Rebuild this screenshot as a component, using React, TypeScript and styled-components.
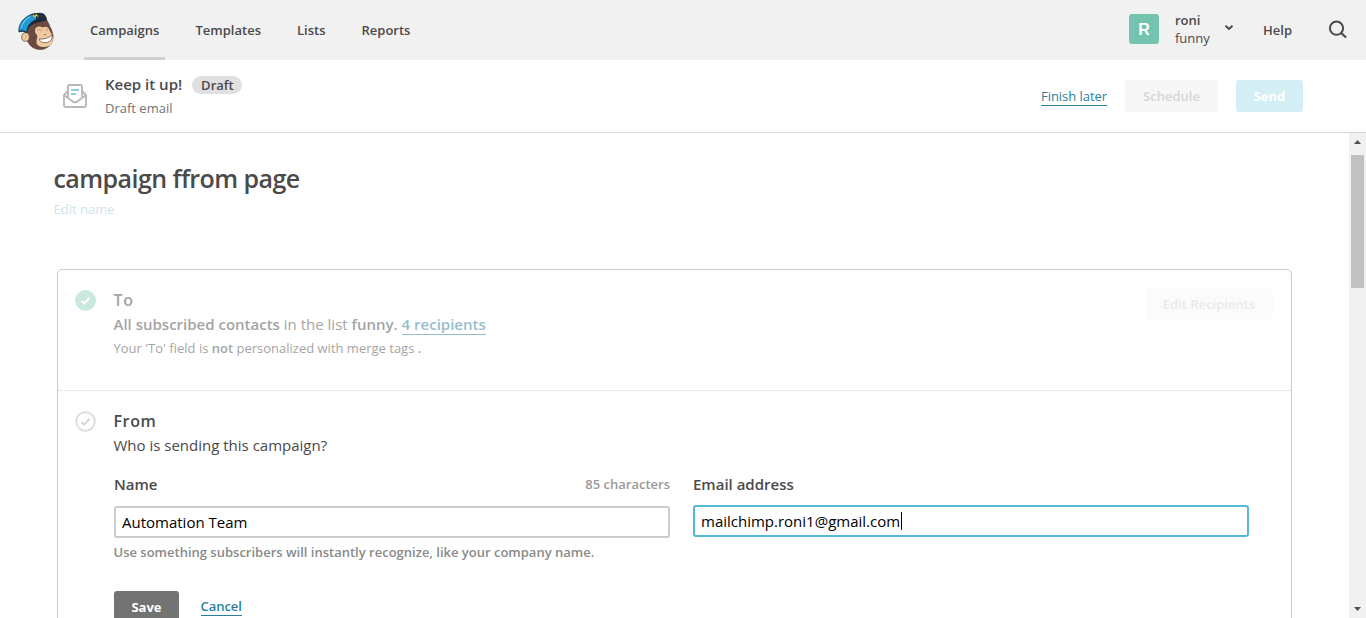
import React from "react";
import styled, { createGlobalStyle } from "styled-components";

const GlobalStyle = createGlobalStyle`
  *, *::before, *::after { box-sizing: border-box; }
  html, body { margin: 0; padding: 0; height: 100%; overflow: hidden; }
  body { font-family: "Open Sans", "Liberation Sans", sans-serif; color: #4a4a4a; background: #fff; }
`;

const Page = styled.div`
  display: flex;
  flex-direction: column;
  height: 618px;
  overflow: hidden;
`;

const TopBar = styled.header`
  display: flex;
  flex: none;
  height: 60px;
  padding: 0 18px;
  background: #f1f1f1;
`;

const Logo = styled.svg`
  flex: none;
  width: 37px;
  height: 39px;
  margin-top: 12px;
`;

const Nav = styled.nav`
  display: flex;
  flex: 1;
  margin-left: 29px;
  gap: 24px;
`;

const NavItem = styled.a<{ $active?: boolean; $width: number }>`
  width: ${(p) => p.$width}px;
  padding: 0 6px;
  font-size: 13px;
  font-weight: 600;
  line-height: 60px;
  white-space: nowrap;
  box-shadow: ${(p) => (p.$active ? "inset 0 -3px 0 #d0d0d0" : "none")};

  &:nth-child(2) { margin-left: 0.5px; }
`;

const Avatar = styled.div`
  width: 30px;
  height: 30px;
  margin-top: 14px;
  border-radius: 3px;
  background: #74c3ae;
  color: #fff;
  font: bold 16px/31px "Liberation Sans", sans-serif;
  text-align: center;
`;

const Account = styled.div`
  width: 50px;
  margin: 11px 0 0 16px;
  font-size: 13px;
  line-height: 18px;
`;

const AccountName = styled.div`
  font-weight: 600;
`;

const Chevron = styled.svg`
  width: 10px;
  height: 8px;
  margin: 24px 1px 0 -1px;
`;

const HelpLink = styled.a`
  width: 66px;
  margin-left: 28px;
  font-size: 13px;
  font-weight: 600;
  line-height: 60px;
`;

const SearchIcon = styled.svg`
  width: 20px;
  height: 20px;
  margin: 20px 0 0 -1px;
`;

const CampaignBar = styled.section`
  display: flex;
  flex: none;
  height: 73px;
  padding: 0 63px;
  border-bottom: 1px solid #d6d6d6;
`;

const EnvelopeIcon = styled.svg`
  width: 24px;
  height: 24px;
  margin-top: 24px;
`;

const CampaignInfo = styled.div`
  flex: 1;
  margin: 15px 0 0 18px;
`;

const CampaignTitle = styled.div`
  display: flex;
  height: 20px;
  font-size: 15px;
  font-weight: 600;
  line-height: 19px;
`;

const Badge = styled.span`
  height: 18px;
  margin: 1px 0 0 10px;
  padding: 0 8px 0 9px;
  border-radius: 9px;
  background: #e0e0e0;
  font-size: 13px;
  line-height: 18px;
`;

const CampaignType = styled.div`
  margin-top: 4px;
  color: #737373;
  font-size: 13px;
  line-height: 18px;
`;

const TextLink = styled.a<{ $bold?: boolean }>`
  height: 18px;
  border-bottom: 1px solid #2c7f9b;
  color: #2c7f9b;
  font-size: 13px;
  font-weight: ${(p) => (p.$bold ? 600 : 400)};
  letter-spacing: -0.05px;
  line-height: 16px;
  white-space: nowrap;
`;

const Actions = styled.div`
  display: flex;
  align-items: flex-start;
  gap: 18px;
  padding-top: 20px;

  ${TextLink} { margin-top: 8px; }
`;

const Button = styled.button<{ $bg: string; $fg: string; $width: number; $weight?: number }>`
  width: ${(p) => p.$width}px;
  height: 32px;
  padding: 0;
  border: 0;
  border-radius: 3px;
  background: ${(p) => p.$bg};
  color: ${(p) => p.$fg};
  font-family: inherit;
  font-size: 13px;
  font-weight: ${(p) => p.$weight ?? 700};
  line-height: 32px;
`;

const Body = styled.div`
  display: flex;
  flex: 1;
  min-height: 0;
`;

const Content = styled.main`
  flex: 1;
  min-width: 0;
  padding: 27px 57px 0;
  overflow: hidden;
`;

const PageTitle = styled.h1`
  margin: 0 0 0 -3.5px;
  font-size: 25px;
  font-weight: 600;
  letter-spacing: -0.57px;
  line-height: 36px;
`;

const EditName = styled.a`
  display: block;
  margin: 4px 0 0 -3.5px;
  color: #d0e4ea;
  font-size: 13px;
  line-height: 18px;
`;

const Card = styled.div`
  height: 420px;
  margin-top: 51px;
  border: 1px solid #ccc;
  border-radius: 5px;
`;

const Section = styled.section<{ $height: number; $divided?: boolean }>`
  display: flex;
  height: ${(p) => p.$height}px;
  padding: 18px 18px 0 17px;
  border-bottom: ${(p) => (p.$divided ? "1px dotted #d6d6d6" : "0")};
`;

const StatusIcon = styled.svg`
  flex: none;
  width: 21px;
  height: 21px;
  margin-top: 1.5px;
`;

const SectionBody = styled.div<{ $muted?: boolean }>`
  flex: 1;
  margin-left: 17.5px;
  opacity: ${(p) => (p.$muted ? 0.5 : 1)};
  b { font-weight: 600; }
`;

const SectionTitle = styled.h2`
  margin: 0;
  font-size: 16px;
  font-weight: 600;
  letter-spacing: 0.6px;
  line-height: 24px;
`;

const SectionText = styled.p`
  margin: 0;
  font-size: 15px;
  line-height: 25px;
`;

const RecipientsLink = styled.a`
  border-bottom: 1px solid #2c7f9b;
  color: #2c7f9b;
  font-weight: 600;
`;

const SmallText = styled.p`
  margin: 0;
  font-size: 13px;
  line-height: 22px;
`;

const Fields = styled.div`
  display: flex;
  gap: 23px;
  margin: 16px 0 0 0.5px;
`;

const Field = styled.div`
  width: 556px;
`;

const FieldHeader = styled.div`
  display: flex;
  justify-content: space-between;
  height: 20px;
  font-size: 15px;
  font-weight: 600;
  line-height: 20px;
`;

const Counter = styled.span`
  color: #999;
  font-size: 13px;
`;

const TextBox = styled.div<{ $focused?: boolean }>`
  display: flex;
  align-items: center;
  height: 32px;
  margin-top: ${(p) => (p.$focused ? 11 : 12)}px;
  padding: 0 6px;
  border: 2px solid ${(p) => (p.$focused ? "#52bad5" : "#ccc")};
  border-radius: 3px;
  color: #000;
  font-size: 15px;
  line-height: 28px;
`;

const Caret = styled.span`
  width: 1px;
  height: 18px;
  margin-left: 1px;
  background: #000;
`;

const Hint = styled.div`
  margin: 5px 0 0 -0.5px;
  color: #8a8a8a;
  font-size: 13px;
  font-weight: 600;
  line-height: 18px;
`;

const FormActions = styled.div`
  display: flex;
  gap: 21.5px;
  margin: 30px 0 0 0.5px;

  ${TextLink} { margin-top: 7px; }
`;

const ScrollTrack = styled.div`
  display: flex;
  flex-direction: column;
  align-items: center;
  justify-content: space-between;
  width: 17px;
  padding: 7px 0 7px;
  background: #f1f1f1;
`;

const ScrollThumb = styled.div`
  width: 13px;
  height: 133px;
  margin: 11px 0 auto;
  background: #c1c1c1;
`;

const Arrow = styled.svg`
  width: 7px;
  height: 4px;
`;

function MonkeyLogo() {
  return (
    <Logo viewBox="0 0 37 39">
      <path d="M9 20C9 12 14 9 20 9L28 7C30 10 31 12 32 15C34 18 34 20 35 23C36 31 30 37.5 22.5 37.5C15 37.5 11 33 9 28Z" fill="#6b4b41" stroke="#4b332d" strokeWidth=".6" />
      <path d="M17 18C17.5 14.5 21 13.5 24.5 15.5C28 13.5 31 15.5 31.5 18.5L33 21C36 25 35.5 31 31 34C26 36.5 19 34.5 18.5 31C18 28 20 26 19 23C17.5 22 17 20 17 18Z" fill="#efcaa0" />
      <path d="M19 18.5C21 17 23 17.5 24 19M27.5 17.5L30 18" stroke="#b28e70" fill="none" strokeWidth=".8" />
      <path d="M26 22.3L28 22.8" stroke="#7c5c4a" strokeWidth=".8" />
      <path d="M21.5 27C26 27.5 31 26 34 23C34.8 28 31 30.7 27 30.7C23.5 30.7 21.5 29.2 21.5 27Z" fill="#fff" stroke="#5a4037" strokeWidth=".7" />
      <ellipse cx="7.5" cy="25" rx="3.8" ry="4.3" fill="#f1cba1" stroke="#5a4037" strokeWidth=".7" />
      <path d="M7 23C9 23.5 8.5 26 6.5 27" fill="none" stroke="#c29674" strokeWidth=".8" />
      <path d="M1 20C0 13 5 6 12 3C15 2 18 4 20 8C14 10 10 14 9 20.5C6 19 3 19 1 20Z" fill="#209ad3" stroke="#17354a" strokeWidth=".8" />
      <path d="M3 16C4.5 11 8 7 12 5" fill="none" stroke="#68bfe5" strokeWidth="1.3" />
      <path d="M1 19.8C4 17.8 6 18.5 8 20.5" fill="none" stroke="#1b2a38" strokeWidth="1.1" />
      <path d="M8.3 21C8.5 14 13 8.5 20 6.5L26 4C28.5 4.5 29 6 28.5 8C25 10 22.5 9.5 18 11C12 13 10 16 8.3 21Z" fill="#1b2a38" />
      <path d="M12 2.5C16 1 19 1 22 .8C26 1 28 3 28.5 7C25 6 22 7 19 8C18 5 16 3 12 2.5Z" fill="#24323d" />
      <path d="M15 3L17 5L18 2.8L20 4.5" stroke="#e8c544" strokeWidth="1.3" fill="none" />
    </Logo>
  );
}

function Check({ done }: { done?: boolean }) {
  return (
    <StatusIcon viewBox="0 0 21 21" fill="none">
      <circle cx="10.5" cy="10.5" r={done ? 10.4 : 9.3} fill={done ? "#c8e8e0" : "#fff"} stroke={done ? "none" : "#dbdbdb"} strokeWidth="1.8" />
      <path d="M6.5 11L9.2 13.6L14.5 7.8" stroke={done ? "#fff" : "#d6d6d6"} strokeWidth="2.1" />
    </StatusIcon>
  );
}

export default function App() {
  return (
    <Page>
      <GlobalStyle />
      <TopBar>
        <MonkeyLogo />
        <Nav>
          <NavItem $active $width={81}>Campaigns</NavItem>
          <NavItem $width={77.5}>Templates</NavItem>
          <NavItem $width={40.5}>Lists</NavItem>
          <NavItem $width={62}>Reports</NavItem>
        </Nav>
        <Avatar>R</Avatar>
        <Account>
          <AccountName>roni</AccountName>
          <div>funny</div>
        </Account>
        <Chevron viewBox="0 0 10 8" fill="none">
          <path d="M1.5 1.8L5 5L8.5 1.8" stroke="#4a4a4a" strokeWidth="2" />
        </Chevron>
        <HelpLink>Help</HelpLink>
        <SearchIcon viewBox="0 0 20 20" fill="none" stroke="#4a4a4a" strokeWidth="2">
          <circle cx="8.5" cy="8.2" r="6.6" />
          <path d="M13.2 13L18.1 17.5" strokeWidth="2.3" />
        </SearchIcon>
      </TopBar>

      <CampaignBar>
        <EnvelopeIcon viewBox="0 0 24 24" fill="none" stroke="#b9b9b9" strokeWidth="1.9" strokeLinejoin="round">
          <path d="M4.5 7.5L1 11V21.5Q1 23 2.5 23H21.5Q23 23 23 21.5V11L19.5 7.5" />
          <path d="M1.5 11.5L9.8 17.6Q12 19 14.2 17.6L22.5 11.5" />
          <path d="M5 13.5V2.5Q5 1 6.5 1H17.5Q19 1 19 2.5V13.5" />
          <path d="M8 6H16M8 10H13" stroke="#8ecbe5" />
        </EnvelopeIcon>
        <CampaignInfo>
          <CampaignTitle>
            Keep it up!<Badge>Draft</Badge>
          </CampaignTitle>
          <CampaignType>Draft email</CampaignType>
        </CampaignInfo>
        <Actions>
          <TextLink>Finish later</TextLink>
          <Button $bg="#f7f7f7" $fg="#d6d6d6" $width={93} $weight={600}>Schedule</Button>
          <Button $bg="#d4eef5" $fg="#fff" $width={67}>Send</Button>
        </Actions>
      </CampaignBar>

      <Body>
        <Content>
          <PageTitle>campaign ffrom page</PageTitle>
          <EditName>Edit name</EditName>
          <Card>
            <Section $height={121} $divided>
              <Check done />
              <SectionBody $muted>
                <SectionTitle>To</SectionTitle>
                <SectionText>
                  <b>All subscribed contacts</b> in the list <b>funny.</b> <RecipientsLink>4 recipients</RecipientsLink>
                </SectionText>
                <SmallText>
                  Your 'To' field is <b>not</b> personalized with merge tags <b>.</b>
                </SmallText>
              </SectionBody>
              <Button $bg="#fbfbfb" $fg="#eaeaea" $width={128} $weight={600}>Edit Recipients</Button>
            </Section>
            <Section $height={280}>
              <Check />
              <SectionBody>
                <SectionTitle>From</SectionTitle>
                <SectionText>Who is sending this campaign?</SectionText>
                <Fields>
                  <Field>
                    <FieldHeader>
                      Name<Counter>85 characters</Counter>
                    </FieldHeader>
                    <TextBox>Automation Team</TextBox>
                    <Hint>Use something subscribers will instantly recognize, like your company name.</Hint>
                  </Field>
                  <Field>
                    <FieldHeader>Email address</FieldHeader>
                    <TextBox $focused>
                      mailchimp.roni1@gmail.com<Caret />
                    </TextBox>
                  </Field>
                </Fields>
                <FormActions>
                  <Button $bg="#737373" $fg="#fff" $width={65}>Save</Button>
                  <TextLink $bold>Cancel</TextLink>
                </FormActions>
              </SectionBody>
            </Section>
          </Card>
        </Content>
        <ScrollTrack>
          <Arrow viewBox="0 0 7 4"><path d="M0 4L3.5 0L7 4Z" fill="#505050" /></Arrow>
          <ScrollThumb />
          <Arrow viewBox="0 0 7 4"><path d="M0 0L3.5 4L7 0Z" fill="#505050" /></Arrow>
        </ScrollTrack>
      </Body>
    </Page>
  );
}
